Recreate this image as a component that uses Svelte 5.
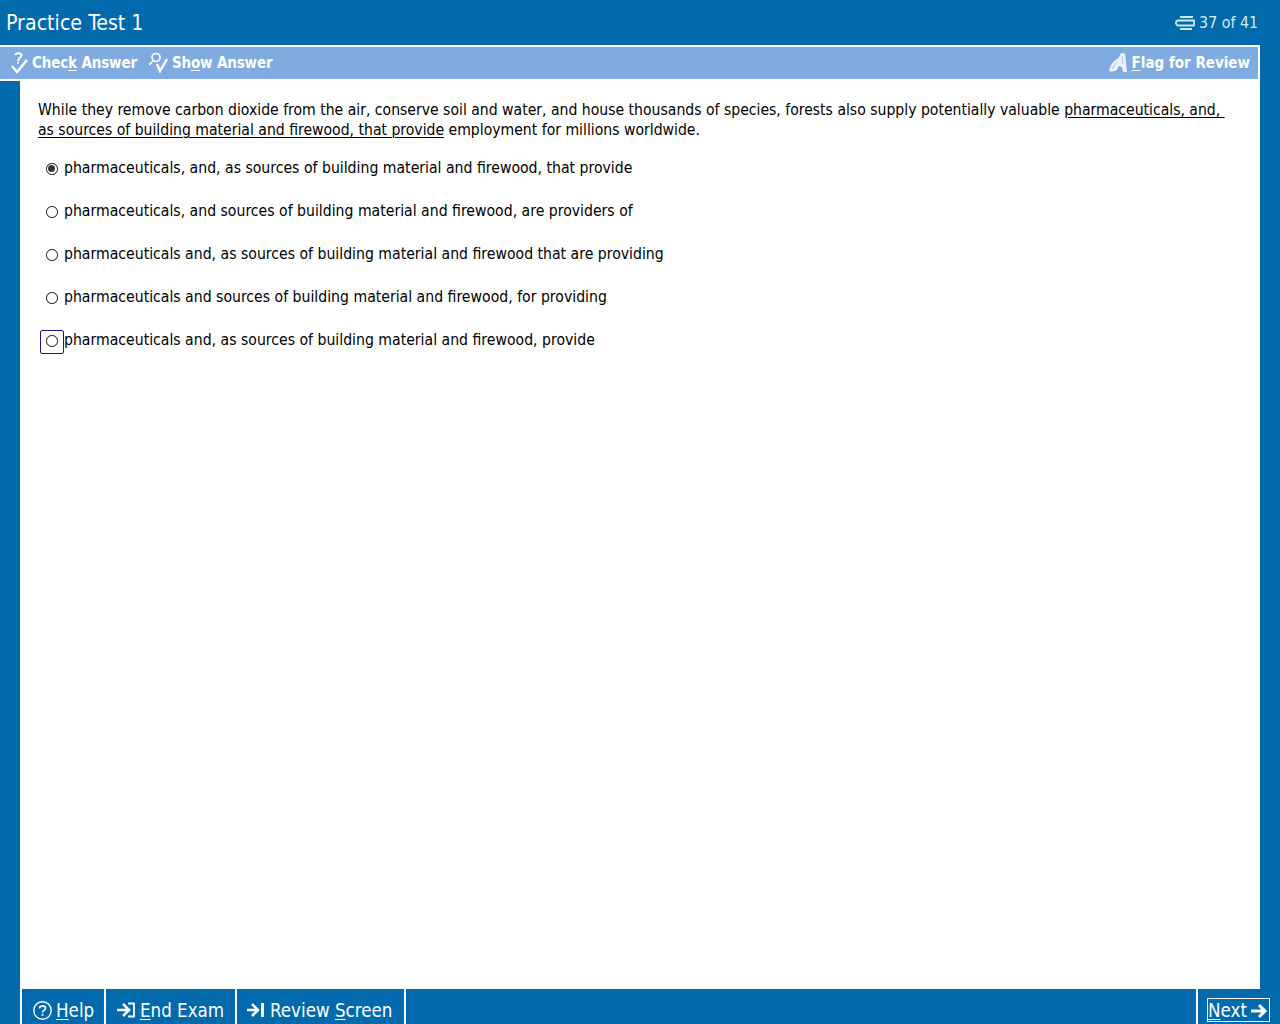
<script>
  const options = [
    'pharmaceuticals, and, as sources of building material and firewood, that provide',
    'pharmaceuticals, and sources of building material and firewood, are providers of',
    'pharmaceuticals and, as sources of building material and firewood that are providing',
    'pharmaceuticals and sources of building material and firewood, for providing',
    'pharmaceuticals and, as sources of building material and firewood, provide'
  ];
</script>

<div class="page">
  <header class="top">
    <h1>Practice Test 1</h1>
    <div class="count">
      <svg width="20" height="15" viewBox="0 0 20 15" fill="none" stroke="#cfe6f5" stroke-width="1.800">
        <path d="M5 2h13M5 5.500H3.500a2.500 2.500 0 0 0 0 5H19v-5zM5 14h12"/>
      </svg>
      <span>37 of 41</span>
    </div>
  </header>

  <div class="toolwrap">
    <nav class="tools">
      <span class="tool">
        <svg width="18" height="22" viewBox="0 0 18 22" fill="none" stroke="#fff">
          <path d="M5 3c1-2.500 6-2.500 6.500 0 .3 2-3 3-3.500 6M8 10v1.500" stroke-width="2"/>
          <path d="M2 14l5 6L17 8" stroke-width="2.600"/>
        </svg>
        <span>Chec<u>k</u> Answer</span>
      </span>
      <span class="tool second">
        <svg width="20" height="22" viewBox="0 0 20 22" fill="none" stroke="#fff">
          <circle cx="7" cy="5.500" r="4" stroke-width="1.700"/>
          <path d="M4 9L0 13" stroke-width="1.700"/>
          <path d="M8 12l3 7 7-12" stroke-width="2.400"/>
        </svg>
        <span>Sh<u>o</u>w Answer</span>
      </span>
      <span class="tool flag">
        <svg width="20" height="22" viewBox="0 0 20 22">
          <path d="M1 19C2 14 5 9 9 7c2-1 3-4 4-6l4 .5 2 18.500h-4l-1-5-3-1c-1 1-1.500 2-2 4-3 1.500-6 2-8 1z" fill="#eef3fb"/>
          <path d="M14 4l1 8M9 10l-5 7" stroke="#a9c6ea" fill="none"/>
        </svg>
        <span><u>F</u>lag for Review</span>
      </span>
    </nav>
  </div>

  <div class="middle">
    <div class="rail"></div>
    <main class="content">
      <p class="stem">While they remove carbon dioxide from the air, conserve soil and water, and house thousands of species, forests also supply potentially valuable <u>pharmaceuticals, and,&nbsp;<br>as sources of building material and firewood, that provide</u> employment for millions worldwide.</p>
      <ul class="options">
        {#each options as text, i}
          <li class="option">
            <span class="mark" class:focused={i === 4}>
              <span class="radio" class:on={i === 0}></span>
            </span>
            <span>{text}</span>
          </li>
        {/each}
      </ul>
    </main>
    <div class="rail right"></div>
  </div>

  <footer class="bottom">
    <div class="rail foot"></div>
    <div class="bar">
      <span class="btn help">
        <svg width="19" height="19" viewBox="0 0 19 19" fill="none" stroke="#fff" stroke-width="1.400">
          <circle cx="9.500" cy="9.500" r="8.700"/>
          <path d="M6.500 7.300c.3-3.200 6-3.200 6 0 0 2.200-3 2-3 4.200" stroke-width="1.700"/>
          <path d="M9.500 12.800v2" stroke-width="1.700"/>
        </svg>
        <span><u>H</u>elp</span>
      </span>
      <span class="btn end">
        <svg width="20" height="16" viewBox="0 0 20 16" fill="none" stroke="#fff">
          <path d="M1 8h11M7 2l6 6-6 6" stroke-width="2.600"/>
          <path d="M12 1.500h6v13h-6" stroke-width="1.800"/>
        </svg>
        <span><u>E</u>nd Exam</span>
      </span>
      <span class="btn review">
        <svg width="18" height="16" viewBox="0 0 18 16" fill="none" stroke="#fff" stroke-width="2.600">
          <path d="M0 8h10M5 2l6 6-6 6"/>
          <path d="M15.500 1v14" stroke-width="3"/>
        </svg>
        <span>Review <u>S</u>creen</span>
      </span>
      <span class="spacer"></span>
      <span class="next-cell">
        <span class="next">
          <span><u>N</u>ext</span>
          <svg width="17" height="16" viewBox="0 0 17 16" fill="none" stroke="#fff" stroke-width="3">
            <path d="M0 8h14M8 2l6 6-6 6"/>
          </svg>
        </span>
      </span>
    </div>
  </footer>
</div>

<style>
  :global(body) {
    margin: 0;
    background: #006aac;
    font-family: "DejaVu Sans Condensed", "DejaVu Sans", sans-serif;
    font-stretch: condensed;
  }
  u { text-underline-offset: 2px; text-decoration-thickness: 1px; }
  svg { flex: none; display: block; }
  .page {
    width: 1280px;
    height: 1024px;
    display: flex;
    flex-direction: column;
    overflow: hidden;
    background: #006aac;
  }
  .top {
    height: 45px;
    flex: none;
    display: flex;
    align-items: center;
    justify-content: space-between;
    padding: 0 22px 0 6px;
    color: #fff;
  }
  h1 {
    margin: 0;
    font-size: 21.200px;
    font-weight: 400;
    line-height: 45px;
  }
  .count {
    display: flex;
    align-items: center;
    gap: 4px;
    font-size: 15.800px;
    color: #d5eaf6;
  }
  .toolwrap {
    width: 1260px;
    flex: none;
    box-sizing: border-box;
    border-top: 2px solid #fff;
    border-right: 2px solid #fff;
  }
  .tools {
    height: 32px;
    background: #7fabe0;
    display: flex;
    align-items: center;
    padding: 0 8px 0 10px;
    color: #fff;
    font-size: 15px;
    font-weight: 700;
  }
  .tool { display: flex; align-items: center; gap: 4px; letter-spacing: -0.150px; }
  .second { margin-left: 12px; gap: 3px; }
  .flag { margin-left: auto; letter-spacing: 0; }
  .middle {
    flex: 1;
    min-height: 0;
    display: flex;
  }
  .rail {
    width: 20px;
    flex: none;
    background: #006aac;
    border-top: 2px solid #fff;
    box-sizing: border-box;
  }
  .rail.right { border-top: 0; }
  .rail.foot { border-top: 0; }
  .content {
    flex: 1;
    background: #fff;
    padding: 21px 18px 0;
    color: #000;
    font-size: 15.600px;
    line-height: 20px;
    min-width: 0;
  }
  .stem { margin: 0; }
  .options { list-style: none; margin: 18px 0 0; padding: 0; font-size: 15.650px; }
  .option {
    height: 43px;
    display: flex;
    align-items: flex-start;
  }
  .mark {
    width: 24px;
    height: 24px;
    margin-left: 2px;
    padding: 4px 0 0 5px;
    box-sizing: border-box;
    border: 1px solid transparent;
    border-radius: 2px;
    flex: none;
  }
  .mark.focused { border-color: #1a1a8c; }
  .radio {
    display: block;
    width: 11.500px;
    height: 11.500px;
    box-sizing: border-box;
    border: 1.500px solid #111;
    border-radius: 50%;
    position: relative;
  }
  .radio.on::after {
    content: "";
    position: absolute;
    inset: 1.250px;
    border-radius: 50%;
    background: #333;
  }
  .bottom {
    height: 35px;
    flex: none;
    display: flex;
    background: #fff;
  }
  .bar {
    margin-left: 2px;
    flex: 1;
    display: flex;
    background: #006aac;
    color: #fff;
    font-size: 18.600px;
  }
  .btn {
    display: flex;
    align-items: center;
    gap: 4px;
    box-sizing: border-box;
    border-right: 2px solid #fff;
    padding: 7px 0 0 10px;
  }
  .help { width: 84px; padding-left: 11px; }
  .end { width: 131px; }
  .review { width: 169px; gap: 5px; }
  .spacer { flex: 1; }
  .next-cell {
    width: 84px;
    box-sizing: border-box;
    border-left: 2px solid #fff;
    padding: 9px 0 0 9px;
  }
  .next {
    width: 63px;
    height: 24px;
    box-sizing: border-box;
    border: 1px solid #fff;
    display: flex;
    align-items: center;
    gap: 4px;
    line-height: 1;
    padding-top: 2px;
  }
</style>
